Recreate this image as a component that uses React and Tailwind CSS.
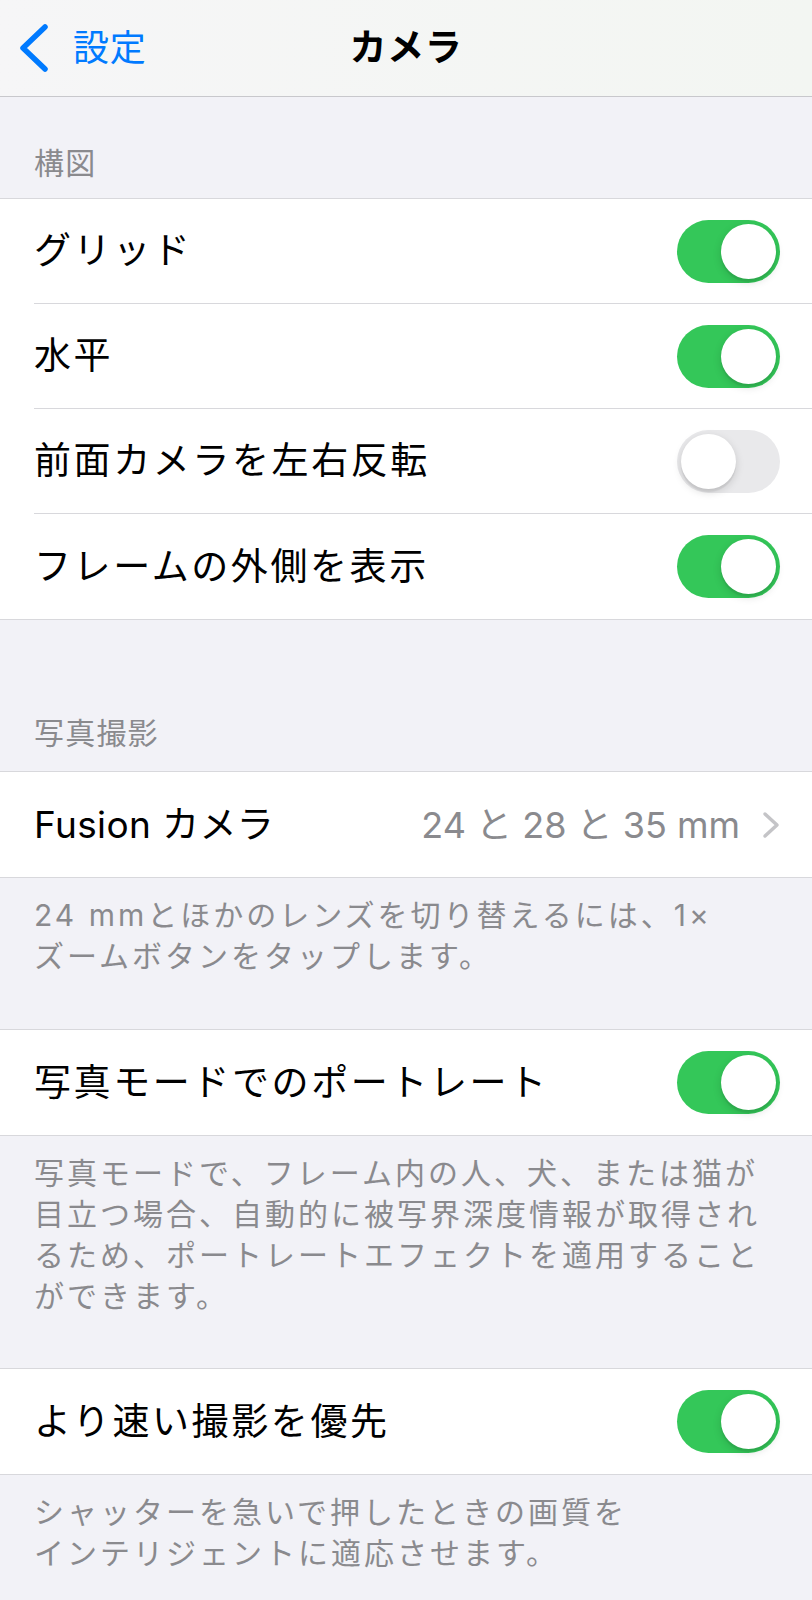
import React from 'react';

const Toggle = ({ on }) => (
  <div
    className={`flex w-[103px] h-[63px] rounded-full p-[4px] ${
      on ? 'bg-[#34c759] justify-end' : 'bg-[#e9e9eb] justify-start'
    }`}
  >
    <div className="w-[55px] h-[55px] rounded-full bg-white shadow-[0_3px_8px_rgba(0,0,0,0.15),0_3px_1px_rgba(0,0,0,0.06)]" />
  </div>
);

const Row = ({ label, last, tight, children }) => (
  <div className="flex pl-[34px] bg-white">
    <div
      className={`flex flex-1 items-center justify-between h-[105px] pr-[32px] ${
        last ? '' : 'border-b border-[#d8d8dc]'
      }`}
    >
      <span
        className={`text-[37px] leading-[44px] text-black ${
          tight ? 'tracking-[0.01em]' : 'tracking-[0.07em]'
        }`}
      >
        {label}
      </span>
      {children}
    </div>
  </div>
);

const Group = ({ children }) => (
  <div className="bg-white border-y border-[#d8d8dc]">{children}</div>
);

const Footer = ({ lines, pb }) => (
  <div className={`px-[34px] pt-[17px] ${pb} text-[30px] leading-[41px] text-[#8a8a8e] tracking-[0.1em]`}>
    {lines.map((l, i) => (
      <div key={i} className="whitespace-nowrap">
        {l}
      </div>
    ))}
  </div>
);

export default function App() {
  return (
    <div className="w-[812px] min-h-[1600px] bg-[#f2f2f7] font-['Inter','Noto_Sans_CJK_JP',sans-serif]">
      {/* Nav bar */}
      <div className="relative flex items-center h-[97px] bg-gradient-to-r from-[#f6f6f7] to-[#f3f6f2] border-b border-[#c8c8cc]">
        <div className="flex items-center pl-[19px] gap-[24px] text-[#007aff]">
          <svg width="30" height="48" viewBox="0 0 30 48" fill="none">
            <polyline
              points="26,3 4,24 26,45"
              stroke="#007aff"
              strokeWidth="5.5"
              strokeLinecap="round"
              strokeLinejoin="round"
            />
          </svg>
          <span className="text-[36px] leading-[44px] tracking-[0.02em]">設定</span>
        </div>
        <div className="absolute inset-x-0 text-center pointer-events-none">
          <span className="text-[37px] leading-[44px] font-bold text-black tracking-[0.02em]">カメラ</span>
        </div>
      </div>

      {/* 構図 */}
      <div className="flex items-end h-[101px] px-[34px] pb-[17px]">
        <span className="text-[30px] leading-[36px] text-[#8a8a8e] tracking-[0.04em]">構図</span>
      </div>
      <Group>
        <Row label="グリッド">
          <Toggle on />
        </Row>
        <Row label="水平">
          <Toggle on />
        </Row>
        <Row label="前面カメラを左右反転">
          <Toggle on={false} />
        </Row>
        <Row label="フレームの外側を表示" last>
          <Toggle on />
        </Row>
      </Group>

      {/* 写真撮影 */}
      <div className="flex items-end h-[151px] px-[34px] pb-[20px]">
        <span className="text-[30px] leading-[36px] text-[#8a8a8e] tracking-[0.04em]">写真撮影</span>
      </div>
      <Group>
        <Row label="Fusion カメラ" last tight>
          <div className="flex items-center gap-[22px]">
            <span className="text-[36px] leading-[44px] text-[#8a8a8e]">24 と 28 と 35 mm</span>
            <svg width="18" height="28" viewBox="0 0 18 28" fill="none">
              <polyline
                points="3,3 15,14 3,25"
                stroke="#c4c4c7"
                strokeWidth="3.5"
                strokeLinecap="round"
                strokeLinejoin="round"
              />
            </svg>
          </div>
        </Row>
      </Group>
      <Footer
        pb="pb-[52px]"
        lines={['24 mmとほかのレンズを切り替えるには、1×', 'ズームボタンをタップします。']}
      />

      <Group>
        <Row label="写真モードでのポートレート" last>
          <Toggle on />
        </Row>
      </Group>
      <Footer
        pb="pb-[51px]"
        lines={[
          '写真モードで、フレーム内の人、犬、または猫が',
          '目立つ場合、自動的に被写界深度情報が取得され',
          'るため、ポートレートエフェクトを適用すること',
          'ができます。',
        ]}
      />

      <Group>
        <Row label="より速い撮影を優先" last>
          <Toggle on />
        </Row>
      </Group>
      <Footer
        pb="pb-[40px]"
        lines={['シャッターを急いで押したときの画質を', 'インテリジェントに適応させます。']}
      />
    </div>
  );
}
